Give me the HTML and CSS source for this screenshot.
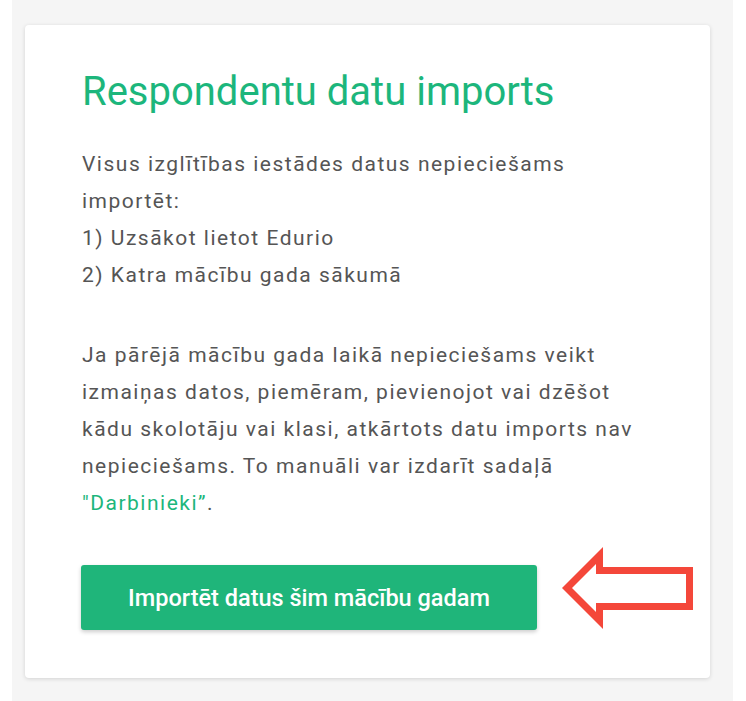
FILE: index.html
```html
<!DOCTYPE html>
<html lang="lv">
<head>
<meta charset="utf-8">
<title>Respondentu datu imports</title>
<link rel="stylesheet" href="styles.css">
</head>
<body>
<div class="page">
  <section class="card">
    <h1 class="title">Respondentu datu imports</h1>
    <p class="text">Visus izglītības iestādes datus nepieciešams importēt:<br>1) Uzsākot lietot Edurio<br>2) Katra mācību gada sākumā</p>
    <p class="text">Ja pārējā mācību gada laikā nepieciešams veikt izmaiņas datos, piemēram, pievienojot vai dzēšot kādu skolotāju vai klasi, atkārtots datu imports nav nepieciešams. To manuāli var izdarīt sadaļā <a class="link" href="#">"Darbinieki”</a>.</p>
    <div class="actions">
      <button class="btn" type="button">Importēt datus šim mācību gadam</button>
      <svg class="arrow" width="135" height="88" viewBox="560 544 135 88" aria-hidden="true">
        <path fill="#f4473a" fill-rule="evenodd" d="M562 588 L603 547 L603 567 L693 567 L693 610 L603 610 L603 629 Z M572 588 L596 564 L596 574 L686 574 L686 603 L596 603 L596 612 Z"/>
      </svg>
    </div>
  </section>
</div>
</body>
</html>
```
FILE: styles.css
```css
html, body {
  margin: 0;
  padding: 0;
  background: #ffffff;
}
body {
  font-family: Roboto, "Liberation Sans", Arial, sans-serif;
}
.page {
  margin: 0 13px 0 12px;
  background: #f5f5f5;
  padding: 25px 23px 25px 13px;
  min-height: 651px;
}
.card {
  background: #ffffff;
  border-radius: 4px;
  box-shadow: 0 1px 4px rgba(0, 0, 0, 0.14);
  padding: 43px 57px 46px 57px;
}
.title {
  margin: 0 0 30px;
  font-size: 40px;
  line-height: 48px;
  font-weight: 400;
  color: #1cb67c;
}
.text {
  margin: 0 0 43px;
  font-family: Roboto, "Liberation Sans", Arial, sans-serif;
  font-size: 21px;
  letter-spacing: 1.5px;
  line-height: 37px;
  color: #555555;
}
.link {
  color: #1cb67c;
  text-decoration: none;
}
.actions {
  display: flex;
  align-items: flex-start;
  gap: 23px;
}
.btn {
  flex-shrink: 0;
  width: 456px;
  height: 65px;
  margin-left: -1px;
  border: none;
  border-radius: 3px;
  background: #1fb57a;
  color: #ffffff;
  font-family: Roboto, "Liberation Sans", Arial, sans-serif;
  font-size: 23.5px;
  font-weight: 500;
  box-shadow: 0 2px 4px rgba(0, 0, 0, 0.2);
}
.arrow {
  flex-shrink: 0;
  display: block;
  margin-top: -21px;
}
```
